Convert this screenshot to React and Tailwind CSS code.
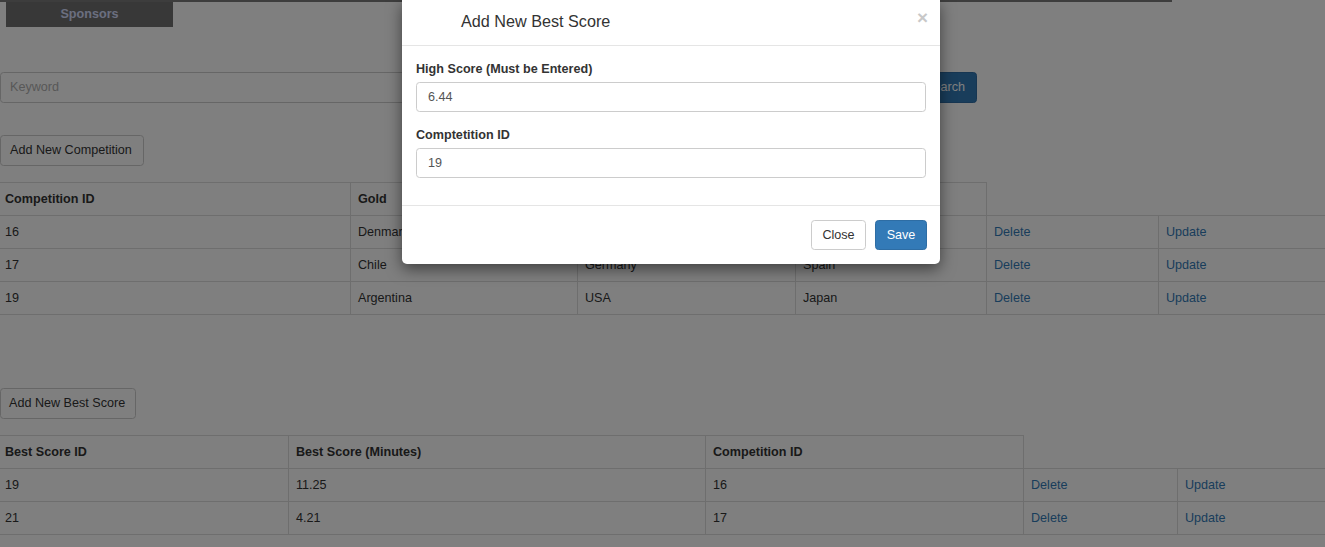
import React from "react";

const font = { fontFamily: '"Liberation Sans", Arial, sans-serif' };

function DataTable({ cols, header, rows }) {
  return (
    <div className="w-[1325px] text-[12.6px] leading-[18px] text-[#333]">
      <div className="flex h-[34px] border-b border-[#ddd]">
        {header.map((h, i) => (
          <div
            key={i}
            style={{ width: cols[i] }}
            className={`flex h-[33px] shrink-0 items-center border-t border-r border-[#ddd] font-bold ${i === 0 ? "pl-[5px]" : "pl-[7px]"}`}
          >
            {h}
          </div>
        ))}
        <div className="flex-1" />
      </div>
      {rows.map((r, ri) => (
        <div key={ri} className="flex h-[33px] border-b border-[#ddd]">
          {r.map((c, ci) => (
            <div
              key={ci}
              style={{ width: cols[ci] }}
              className={`flex h-[32px] shrink-0 items-center ${ci < r.length - 1 ? "border-r border-[#ddd]" : ""} ${ci === 0 ? "pl-[5px]" : "pl-[7px]"} ${c === "Delete" || c === "Update" ? "text-[#337ab7]" : ""}`}
            >
              {c}
            </div>
          ))}
        </div>
      ))}
    </div>
  );
}

export default function App() {
  return (
    <div style={font} className="relative h-[547px] w-[1325px] overflow-hidden bg-white text-[#333]">
      {/* page */}
      <div className="h-[2px] w-[1172px] bg-[#7a7a7a]" />
      <div className="ml-[6px] flex h-[25px] w-[167px] items-center justify-center bg-[#717171] text-[12.6px] font-bold text-[#d6deff]">
        Sponsors
      </div>

      <div className="mt-[45px] flex h-[31px]">
        <div className="flex h-[31px] w-[913px] items-center rounded-l-[3.6px] border border-[#ccc] pl-[9px] text-[12.6px] text-[#b0b0b0]">
          Keyword
        </div>
        <div className="flex h-[31px] w-[64px] items-center justify-center rounded-r-[3.6px] border border-[#2e6da4] bg-[#337ab7] text-[12.6px] text-white">
          Search
        </div>
      </div>

      <div className="mt-[32px] flex h-[31px] w-[144px] items-center rounded-[3.6px] border border-[#ccc] pl-[9px] text-[12.6px]">
        Add New Competition
      </div>

      <div className="mt-[16px]">
        <DataTable
          cols={[351, 227, 218, 191, 172, 166]}
          header={["Competition ID", "Gold", "Silver", "Bronze"]}
          rows={[
            ["16", "Denmark", "", "", "Delete", "Update"],
            ["17", "Chile", "Germany", "Spain", "Delete", "Update"],
            ["19", "Argentina", "USA", "Japan", "Delete", "Update"],
          ]}
        />
      </div>

      <div className="mt-[73px] flex h-[31px] w-[136px] items-center rounded-[3.6px] border border-[#ccc] pl-[8px] text-[12.6px]">
        Add New Best Score
      </div>

      <div className="mt-[16px]">
        <DataTable
          cols={[289, 417, 318, 154, 147]}
          header={["Best Score ID", "Best Score (Minutes)", "Competition ID"]}
          rows={[
            ["19", "11.25", "16", "Delete", "Update"],
            ["21", "4.21", "17", "Delete", "Update"],
          ]}
        />
      </div>

      {/* backdrop */}
      <div className="absolute inset-0 bg-black/50" />

      {/* modal */}
      <div className="absolute left-[402px] top-0 w-[538px] rounded-b-[5px] bg-white shadow-[0_5px_15px_rgba(0,0,0,0.5)]">
        <div className="relative flex h-[46px] items-center border-b border-[#e5e5e5] pb-[3px] pl-[59px]">
          <span className="text-[16.2px] text-[#333]">Add New Best Score</span>
          <span className="absolute right-[12px] top-[6px] text-[18.9px] font-bold leading-[24px] text-[#c8c8c8]">×</span>
        </div>
        <div className="px-[14px] pb-[13.5px] pt-[13.5px] text-[12.6px]">
          <div className="mb-[13.5px]">
            <div className="mb-[4.5px] h-[18px] font-bold leading-[18px]">High Score (Must be Entered)</div>
            <div className="flex h-[30px] items-center rounded-[3.6px] border border-[#ccc] pl-[11px] text-[#555]">6.44</div>
          </div>
          <div className="mb-[13.5px]">
            <div className="mb-[4.5px] h-[18px] font-bold leading-[18px]">Comptetition ID</div>
            <div className="flex h-[30px] items-center rounded-[3.6px] border border-[#ccc] pl-[11px] text-[#555]">19</div>
          </div>
        </div>
        <div className="flex justify-end gap-[9px] border-t border-[#e5e5e5] px-[13px] pb-[13.5px] pt-[14px] text-[12.6px]">
          <div className="flex h-[30px] w-[55px] items-center justify-center rounded-[3.6px] border border-[#ccc] bg-white text-[#333]">Close</div>
          <div className="flex h-[30px] w-[52px] items-center justify-center rounded-[3.6px] border border-[#2e6da4] bg-[#337ab7] text-white">Save</div>
        </div>
      </div>
    </div>
  );
}
